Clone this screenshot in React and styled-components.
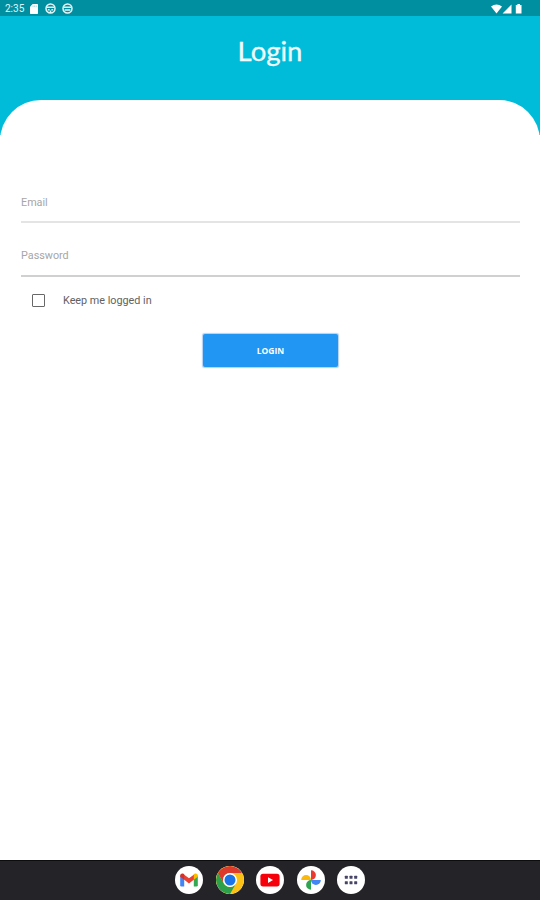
import React, { useState } from 'react';
import styled, { createGlobalStyle } from 'styled-components';

const GlobalStyle = createGlobalStyle`
    *{
        box-sizing:border-box;
    }
    body{
        margin:0;
        background:#fff;
        font-family:Roboto,sans-serif;
    }
`

export default function App() {
    return (
        <Screen>
            <GlobalStyle />
            <StatusBar />
            <Header>
                <Title>Login</Title>
            </Header>
            <LoginForm />
            <TaskBar />
        </Screen>
    )
}

function StatusBar() {
    return (
        <StatusWrapper>
            <Clock>2:35</Clock>
            <SdIcon viewBox="0 0 9 11">
                <path d="M3 0H8.2Q9 0 9 .8V10.2Q9 11 8.2 11H.8Q0 11 0 10.2V3Z" fill="#fff" />
                <path d="M3.4 1.5V3.4M5.2 1.5V3.4M7 1.5V3.4" stroke="#8fced6" strokeWidth=".8" />
            </SdIcon>
            <RoundIcon viewBox="0 0 11 11">
                <circle cx="5.5" cy="5.5" r="4.5" fill="none" stroke="#e4f5f7" strokeWidth="1.5" />
                <path d="M2 4.2H9M2.8 6.8H4.6M6.4 6.8H8.2M5.5 7.4V10" stroke="#e4f5f7" strokeWidth="1.5" />
            </RoundIcon>
            <RoundIcon viewBox="0 0 11 11">
                <circle cx="5.5" cy="5.5" r="4.5" fill="none" stroke="#e4f5f7" strokeWidth="1.5" />
                <path d="M2 4.2H9M2.6 7H8.4" stroke="#e4f5f7" strokeWidth="1.5" />
            </RoundIcon>
            <Signals viewBox="0 0 32 10">
                <path d="M0 2.6Q5.5 -1.8 11 2.6L5.5 9.4Z" fill="#fff" />
                <path d="M20.5 .4V9.4H11.6Z" fill="#fff" />
                <path d="M26.4 0H29V1H30.5V9.6H24.8V1H26.4Z" fill="#fff" />
            </Signals>
        </StatusWrapper>
    )
}

function LoginForm() {
    const [keep, setKeep] = useState(false);
    return (
        <Form onSubmit={(e) => e.preventDefault()}>
            <Field type="email" placeholder="Email" $line="#e4e4e4" />
            <Field type="password" placeholder="Password" $line="#d0d0d0" />
            <KeepRow>
                <CheckBox type="checkbox" checked={keep} onChange={() => setKeep(!keep)} />
                <span>Keep me logged in</span>
            </KeepRow>
            <LoginButton type="submit">LOGIN</LoginButton>
        </Form>
    )
}

function TaskBar() {
    return (
        <TaskWrapper>
            <AppIcon aria-label="Gmail">
                <svg viewBox="0 0 28 28">
                    <path d="M5.2 9.5V19.3Q5.2 20.6 6.5 20.6H9.2V12Z" fill="#4285f4" />
                    <path d="M22.8 9.5V19.3Q22.8 20.6 21.5 20.6H18.8V12Z" fill="#34a853" />
                    <path d="M8.6 8.2L14 12.3L19.4 8.2V13.3L14 17.4L8.6 13.3Z" fill="#ea4335" />
                    <path d="M5.2 9.6C5.2 7.5 7.4 6.9 8.8 7.9L9.2 8.3V13.7L5.2 10.8Z" fill="#d93025" />
                    <path d="M22.8 9.6C22.8 7.5 20.6 6.9 19.2 7.9L18.8 8.3V13.7L22.8 10.8Z" fill="#fbbc04" />
                </svg>
            </AppIcon>
            <AppIcon aria-label="Chrome">
                <svg viewBox="0 0 28 28">
                    <circle cx="14" cy="14" r="14" fill="#fbc116" />
                    <path d="M1.88 7A14 14 0 0 1 26.12 7H14A7 7 0 0 0 7.94 17.5Z" fill="#dc3a2c" />
                    <path d="M1.88 7A14 14 0 0 0 14 28L20.06 17.5A7 7 0 0 1 7.94 17.5Z" fill="#2da04b" />
                    <circle cx="14" cy="14" r="7" fill="#fff" />
                    <circle cx="14" cy="14" r="5.5" fill="#1a73e8" />
                </svg>
            </AppIcon>
            <AppIcon aria-label="YouTube">
                <svg viewBox="0 0 28 28">
                    <rect x="4.4" y="7.8" width="19.2" height="12.6" rx="2.6" fill="#f5000b" />
                    <path d="M12 11.3L17 14.1L12 16.9Z" fill="#fff" />
                </svg>
            </AppIcon>
            <AppIcon aria-label="Photos">
                <svg viewBox="0 0 28 28">
                    <path d="M14 4.2A4.9 4.9 0 0 1 14 14Z" fill="#ea3a30" />
                    <path d="M14 14H23.8A4.9 4.9 0 0 1 14 14Z" fill="#4285f4" />
                    <path d="M14 14V23.8A4.9 4.9 0 0 1 14 14Z" fill="#30a551" />
                    <path d="M4.2 14A4.9 4.9 0 0 1 14 14Z" fill="#fbb90d" />
                </svg>
            </AppIcon>
            <AppIcon aria-label="All apps">
                <svg viewBox="0 0 28 28">
                    {[11.3, 16.7].map((y) => [9.3, 14, 18.7].map((x) => (
                        <rect key={x + '-' + y} x={x - 1.5} y={y - 1.5} width="3" height="3" rx=".5" fill="#454467" />
                    )))}
                </svg>
            </AppIcon>
        </TaskWrapper>
    )
}

const Screen = styled.div`
    display:flex;
    flex-direction:column;
    height:900px;
    background:linear-gradient(#00bcd9 135px,#fff 135px);
    overflow:hidden;
`

const StatusWrapper = styled.div`
    display:flex;
    align-items:center;
    height:16px;
    padding:1px 17px 0 5px;
    background:#008fa1;
`

const Clock = styled.span`
    width:25px;
    color:#e4f5f7;
    font-size:10px;
    line-height:15px;
`

const SdIcon = styled.svg`
    width:8px;
    height:10px;
`

const RoundIcon = styled.svg`
    width:11px;
    height:11px;
    margin-left:7px;
    & + &{
        margin-left:6px;
    }
`

const Signals = styled.svg`
    width:32px;
    height:10px;
    margin-left:auto;
`

const Header = styled.header`
    display:flex;
    justify-content:center;
    height:84px;
    padding-top:17px;
`

const Title = styled.h1`
    margin:0;
    color:#f2fcfe;
    font-family:Lato,sans-serif;
    font-size:27.5px;
    font-weight:400;
    line-height:36px;
    -webkit-text-stroke:.3px #f2fcfe;
`

const Form = styled.form`
    display:flex;
    flex:1;
    flex-direction:column;
    padding:83px 20px 0 21px;
    background:#fff;
    border-radius:41px 41px 0 0;
`

const Field = styled.input`
    flex:none;
    height:40px;
    margin-bottom:14px;
    padding:1px 0;
    border:0;
    border-bottom:2px solid ${(props) => props.$line};
    outline:0;
    font-family:Roboto,sans-serif;
    font-size:10.8px;
    &::placeholder{
        color:#a6a6a6;
        opacity:1;
    }
    & + &{
        padding:0 0 2px;
    }
`

const KeepRow = styled.label`
    display:flex;
    align-items:center;
    gap:18px;
    height:22px;
    margin-top:-2px;
    padding-left:11px;
    color:#626262;
    font-size:10.8px;
`

const CheckBox = styled.input`
    appearance:none;
    width:13px;
    height:13px;
    margin:0;
    border:1.5px solid #686868;
    border-radius:1px;
    &:checked{
        background:#2196f3;
    }
`

const LoginButton = styled.button`
    align-self:center;
    width:135px;
    height:33px;
    margin-top:23px;
    padding:0;
    border:0;
    border-radius:2px;
    background:#2196f3;
    box-shadow:0 0 1px 0.5px rgba(33,120,220,.35);
    color:#fff;
    font-family:"Open Sans",sans-serif;
    font-size:8.5px;
    font-weight:700;
`

const TaskWrapper = styled.nav`
    display:flex;
    justify-content:center;
    align-items:center;
    gap:12.5px;
    height:40px;
    background:#242428;
    box-shadow:inset 0 1px #0c0c0e;
`

const AppIcon = styled.button`
    width:28px;
    height:28px;
    padding:0;
    border:0;
    border-radius:50%;
    background:#fff;
    overflow:hidden;
    svg{
        display:block;
        width:28px;
        height:28px;
    }
`
